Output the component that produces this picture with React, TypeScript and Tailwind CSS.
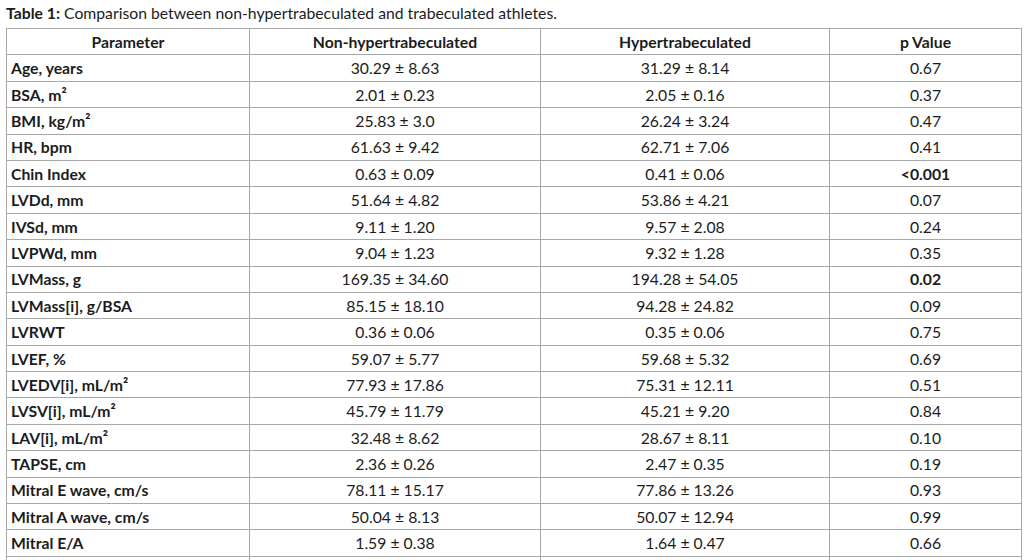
const rows: { name: string; non: string; hyper: string; p: string; bold?: boolean }[] = [
  { name: "Age, years", non: "30.29 ± 8.63", hyper: "31.29 ± 8.14", p: "0.67" },
  { name: "BSA, m²", non: "2.01 ± 0.23", hyper: "2.05 ± 0.16", p: "0.37" },
  { name: "BMI, kg/m²", non: "25.83 ± 3.0", hyper: "26.24 ± 3.24", p: "0.47" },
  { name: "HR, bpm", non: "61.63 ± 9.42", hyper: "62.71 ± 7.06", p: "0.41" },
  { name: "Chin Index", non: "0.63 ± 0.09", hyper: "0.41 ± 0.06", p: "<0.001", bold: true },
  { name: "LVDd, mm", non: "51.64 ± 4.82", hyper: "53.86 ± 4.21", p: "0.07" },
  { name: "IVSd, mm", non: "9.11 ± 1.20", hyper: "9.57 ± 2.08", p: "0.24" },
  { name: "LVPWd, mm", non: "9.04 ± 1.23", hyper: "9.32 ± 1.28", p: "0.35" },
  { name: "LVMass, g", non: "169.35 ± 34.60", hyper: "194.28 ± 54.05", p: "0.02", bold: true },
  { name: "LVMass[i], g/BSA", non: "85.15 ± 18.10", hyper: "94.28 ± 24.82", p: "0.09" },
  { name: "LVRWT", non: "0.36 ± 0.06", hyper: "0.35 ± 0.06", p: "0.75" },
  { name: "LVEF, %", non: "59.07 ± 5.77", hyper: "59.68 ± 5.32", p: "0.69" },
  { name: "LVEDV[i], mL/m²", non: "77.93 ± 17.86", hyper: "75.31 ± 12.11", p: "0.51" },
  { name: "LVSV[i], mL/m²", non: "45.79 ± 11.79", hyper: "45.21 ± 9.20", p: "0.84" },
  { name: "LAV[i], mL/m²", non: "32.48 ± 8.62", hyper: "28.67 ± 8.11", p: "0.10" },
  { name: "TAPSE, cm", non: "2.36 ± 0.26", hyper: "2.47 ± 0.35", p: "0.19" },
  { name: "Mitral E wave, cm/s", non: "78.11 ± 15.17", hyper: "77.86 ± 13.26", p: "0.93" },
  { name: "Mitral A wave, cm/s", non: "50.04 ± 8.13", hyper: "50.07 ± 12.94", p: "0.99" },
  { name: "Mitral E/A", non: "1.59 ± 0.38", hyper: "1.64 ± 0.47", p: "0.66" },
];

const cell = "border border-[#a8a8a8] h-[26.4px] py-0 leading-none";

export default function App() {
  return (
    <div className="w-[1024px] h-[560px] overflow-hidden bg-white text-[#1c1c1c] font-['Lato',sans-serif] text-[15.75px]">
      <p className="pl-[6px] pt-[4px] h-[28px] leading-[18px]">
        <span className="font-bold">Table 1:</span> Comparison between non-hypertrabeculated and trabeculated athletes.
      </p>
      <table className="ml-[6px] w-[1015px] border-collapse table-fixed">
        <colgroup>
          <col className="w-[243px]" />
          <col className="w-[291px]" />
          <col className="w-[289px]" />
          <col className="w-[192px]" />
        </colgroup>
        <thead>
          <tr>
            <th className={`${cell} text-center font-bold`}>Parameter</th>
            <th className={`${cell} text-center font-bold`}>Non-hypertrabeculated</th>
            <th className={`${cell} text-center font-bold`}>Hypertrabeculated</th>
            <th className={`${cell} text-center font-bold`}>p Value</th>
          </tr>
        </thead>
        <tbody>
          {rows.map((r) => (
            <tr key={r.name}>
              <td className={`${cell} pl-[4px] font-bold`}>{r.name}</td>
              <td className={`${cell} text-center`}>{r.non}</td>
              <td className={`${cell} text-center`}>{r.hyper}</td>
              <td className={`${cell} text-center ${r.bold ? "font-bold" : ""}`}>{r.p}</td>
            </tr>
          ))}
          <tr>
            <td className={cell}></td>
            <td className={cell}></td>
            <td className={cell}></td>
            <td className={cell}></td>
          </tr>
        </tbody>
      </table>
    </div>
  );
}
